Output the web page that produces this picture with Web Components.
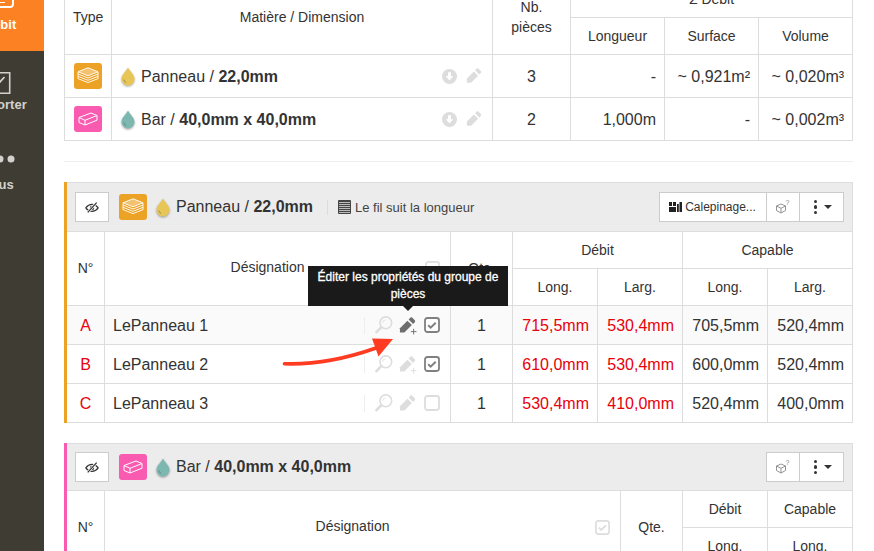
<!DOCTYPE html>
<html lang="fr">
<head>
<meta charset="utf-8">
<title>Débit</title>
<style>
html, body { margin: 0; height: 551px; overflow: hidden; background: #fff; }
body { display: flex; position: relative; font-family: "Liberation Sans", Arial, sans-serif; color: #333; }
main { width: 789px; margin: -20px 0 0 20px; display: flex; flex-direction: column; flex: none; }
main > * { flex: none; }
</style>
</head>
<body>
<mi-sidebar>
  <mi-nav-item icon="cut" active>Débit</mi-nav-item>
  <mi-nav-item icon="export">Exporter</mi-nav-item>
  <mi-nav-item icon="dots">Plus</mi-nav-item>
</mi-sidebar>

<main>
  <mi-summary-table></mi-summary-table>
  <mi-divider></mi-divider>

  <mi-group-panel color="#eca224" kind="panel" drop="#e8c655" calepinage>
    <span slot="title">Panneau / <b>22,0mm</b></span>
    <span slot="note">Le fil suit la longueur</span>
    <mi-parts-table layout="full"></mi-parts-table>
  </mi-group-panel>

  <mi-group-panel color="#f95bb1" kind="bar" drop="#7db8b0" style="margin-top:20px">
    <span slot="title">Bar / <b>40,0mm x 40,0mm</b></span>
    <mi-parts-table layout="bar"></mi-parts-table>
  </mi-group-panel>
</main>

<mi-tooltip>Éditer les propriétés du groupe de pièces</mi-tooltip>
<mi-red-arrow></mi-red-arrow>

<script>
const PENCIL = `<path fill="currentColor" d="M12 .8c.6-.6 1.500-.6 2.100 0l2.600 2.600c.6.6.6 1.500 0 2.100l-1.800 1.800-4.700-4.700z"/><path fill="currentColor" d="M8.900 3.900l4.700 4.700-7.900 7.900H1v-4.700z"/>`;

const ICONS = {
    pencil: `<svg viewBox="0 0 18 18">${PENCIL}</svg>`,
    pencilplus: `<svg viewBox="0 0 18 18" style="overflow:visible">${PENCIL}<path fill="none" stroke="currentColor" stroke-width="1" d="M15.500 12.500v6M12.500 15.500h6"/></svg>`,
    search: `<svg viewBox="0 0 18 18"><circle cx="10.800" cy="6.800" r="5.900" fill="none" stroke="currentColor" stroke-width="1.600"/><path d="M6.300 11.200L1.500 16.200" stroke="currentColor" stroke-width="2.600" stroke-linecap="round"/><path d="M7.500 7a3 3 0 0 1 3-3" fill="none" stroke="currentColor" stroke-width=".8"/></svg>`,
    check: `<svg viewBox="0 0 16 16"><rect x="1" y="1" width="14" height="14" rx="2.400" fill="#fff" stroke="currentColor" stroke-width="1.800"/><path d="M4.200 8.200l2.500 2.500 5-5" fill="none" stroke="currentColor" stroke-width="2"/></svg>`,
    box: `<svg viewBox="0 0 16 16"><rect x="1" y="1" width="14" height="14" rx="2.400" fill="#fff" stroke="currentColor" stroke-width="1.800"/></svg>`,
    download: `<svg viewBox="0 0 16 16"><circle cx="8" cy="8" r="8" fill="currentColor"/><path fill="#fff" d="M6.400 3.400h3.200v4.200h2.500L8 12.200 3.900 7.600h2.500z"/></svg>`,
    eyeslash: `<svg viewBox="0 0 18 14"><path d="M1 7.500C3.500 4.200 6 3 9 3s5.500 1.200 8 4.500C14.500 10.800 12 12 9 12S3.500 10.800 1 7.500z" fill="none" stroke="#333" stroke-width="1.500"/><circle cx="9" cy="7.500" r="2.800" fill="#333"/><path d="M14.500 1L4 13" stroke="#fff" stroke-width="3.200"/><path d="M15 .8L3.500 13.200" stroke="#333" stroke-width="1.600"/></svg>`,
    listalt: `<svg viewBox="0 0 13 14"><rect width="13" height="14" rx="1" fill="#444"/><path d="M1 2.500h11M1 4.500h11M1 6.500h11M1 8.500h11M1 10.500h11M1 12.500h11" stroke="#bbb" stroke-width="1"/></svg>`,
    blocks: `<svg viewBox="0 0 13 10"><path fill="#222" d="M0 0h3v4H0zM4 0h3v4H4zM0 5h7v5H0zM8 2h1.800v8H8zM10.500 0H13v10h-2.500z"/></svg>`,
    cubeq: `<svg viewBox="0 0 16 16"><g fill="none" stroke="#888" stroke-width=".9"><path d="M6 5l4.500 2v4.500L6 14l-4.500-2.500V7z"/><path d="M1.500 7L6 9.300 10.500 7M6 9.300V14"/></g><text x="10.500" y="6" font-size="7" fill="#888" font-family="Liberation Sans">?</text></svg>`,
    stack: `<svg viewBox="0 0 22 18" fill="none" stroke="#fff" stroke-width=".9"><path fill="#fff" fill-opacity=".35" d="M11 .8l10 4-10 4-10-4z"/><path d="M1 7l10 4 10-4M1 9.300l10 4 10-4M1 11.600l10 4 10-4M1 4.800v7M21 4.800v7"/></svg>`,
    brick: `<svg viewBox="0 0 20 14" fill="none" stroke="#fff" stroke-width="1"><path d="M1 5.500L13 1l6 2.500L7 8.300zM1 5.500v5L7 13V8.300M7 13l12-4.800V3.500"/></svg>`
};

class MiIcon extends HTMLElement
{
    constructor(){
        super();
        this.attachShadow({mode: "open"});
        const w = this.getAttribute("w") || 16;
        const h = this.getAttribute("h") || w;
        this.shadowRoot.innerHTML = `
        <style>
        :host { display: inline-flex; flex: none; width: ${w}px; height: ${h}px; }
        svg { width: 100%; height: 100%; display: block; }
        </style>
        ${ICONS[this.getAttribute("name")]}
        `;
    }
}
customElements.define("mi-icon", MiIcon);

class MiSidebar extends HTMLElement
{
    constructor(){
        super();
        this.attachShadow({mode: "open"});
        this.shadowRoot.innerHTML = `
        <style>
        :host { display: block; flex: none; width: 44px; height: 551px; background: #3f3c34; overflow: hidden; }
        div { width: 88px; margin-left: -44px; display: flex; flex-direction: column; }
        </style>
        <div><slot></slot></div>
        `;
    }
}
customElements.define("mi-sidebar", MiSidebar);

class MiNavItem extends HTMLElement
{
    constructor(){
        super();
        this.attachShadow({mode: "open"});
        const kind = this.getAttribute("icon");
        const glyph = {
            cut: `<svg width="30" height="16" viewBox="0 0 30 16" style="margin-top:-8px"><path d="M8 1h20v11q0 3-3 3H8" fill="none" stroke="#fff" stroke-width="2"/><path d="M8 10.500h12" stroke="#fff" stroke-width="1"/></svg>`,
            export: `<svg width="22" height="22" viewBox="0 0 22 22"><path d="M10 .8h10.700v20.400H1V12" fill="none" stroke="#d2d1cd" stroke-width="1.600"/><path d="M6 6.500l4.500 4 5-5.500" fill="none" stroke="#d2d1cd" stroke-width="1.800"/></svg>`,
            dots: `<svg width="34" height="10" viewBox="0 0 34 10"><circle cx="6" cy="5" r="3.500" fill="#d2d1cd"/><circle cx="17" cy="5" r="3.500" fill="#d2d1cd"/><circle cx="28" cy="5" r="3.500" fill="#d2d1cd"/></svg>`
        }[kind];
        const active = this.hasAttribute("active");
        this.shadowRoot.innerHTML = `
        <style>
        :host {
            display: flex; flex-direction: column; align-items: center;
            font-size: 13px; font-weight: bold; color: #d2d1cd;
        }
        :host([active]) { background: #fc8122; color: #fff; height: 51px; }
        :host([icon="export"]) { padding-top: 21px; height: 64px; }
        :host([icon="dots"]) { padding-top: 18px; }
        svg { display: block; }
        span { display: block; line-height: 16px; margin-top: ${active ? 9 : kind === "dots" ? 13 : 3}px; }
        </style>
        ${glyph}
        <span><slot></slot></span>
        `;
    }
}
customElements.define("mi-nav-item", MiNavItem);

class MiSwatch extends HTMLElement
{
    constructor(){
        super();
        this.attachShadow({mode: "open"});
        const bar = this.getAttribute("kind") === "bar";
        this.shadowRoot.innerHTML = `
        <style>
        :host {
            display: inline-flex; flex: none; align-items: center; justify-content: center;
            width: 28px; height: 26px; border-radius: 3px;
            background: ${bar ? "#f95bb1" : "#eca224"};
        }
        </style>
        <mi-icon name="${bar ? "brick" : "stack"}" w="${bar ? 20 : 22}" h="${bar ? 14 : 18}"></mi-icon>
        `;
    }
}
customElements.define("mi-swatch", MiSwatch);

class MiDrop extends HTMLElement
{
    constructor(){
        super();
        this.attachShadow({mode: "open"});
        const color = this.getAttribute("color");
        this.shadowRoot.innerHTML = `
        <style>
        :host { display: inline-flex; flex: none; width: 14px; height: 19px; }
        svg { filter: drop-shadow(0 1px 1px rgba(0,0,0,.35)); overflow: visible; }
        </style>
        <svg width="14" height="19" viewBox="0 0 14 19">
            <path fill="${color}" d="M7 .5C8.500 4 13.500 7.500 13.500 12a6.500 6.500 0 0 1-13 0C.5 7.500 5.500 4 7 .5z"/>
            <path d="M2.800 12.500a3.800 3.800 0 0 0 2.400 3" fill="none" stroke="rgba(70,70,90,.55)" stroke-width=".8"/>
        </svg>
        `;
    }
}
customElements.define("mi-drop", MiDrop);

class MiDivider extends HTMLElement
{
    constructor(){
        super();
        this.attachShadow({mode: "open"});
        this.shadowRoot.innerHTML = `
        <style>
        :host { display: block; height: 1px; background: #eee; margin: 20px 0; }
        </style>
        `;
    }
}
customElements.define("mi-divider", MiDivider);

const TABLE_CSS = `
    table { border-collapse: separate; border-spacing: 0; table-layout: fixed; width: 100%; font-size: 14px; color: #333; }
    th, td { box-sizing: border-box; border-right: 1px solid #ddd; border-bottom: 1px solid #ddd; padding: 0 8px; }
    th { font-weight: normal; text-align: center; line-height: 20px; }
    th[rowspan] { padding-bottom: 2px; }
    td { font-size: 16px; }
    td.t { padding-top: 2px; }
    .r { text-align: right; }
    .c { text-align: center; }
`;

class MiSummaryTable extends HTMLElement
{
    constructor(){
        super();
        this.attachShadow({mode: "open"});
        const row = (kind, drop, label, qty, len, surf, vol) => `
            <tr class="data">
                <td class="c"><mi-swatch kind="${kind}"></mi-swatch></td>
                <td class="mat">
                    <div class="mat-in">
                        <mi-drop color="${drop}"></mi-drop>
                        <span class="label">${label}</span>
                        <mi-icon name="download" w="15" style="color:#ddd"></mi-icon>
                        <mi-icon name="pencil" w="16" style="color:#ddd"></mi-icon>
                    </div>
                </td>
                <td class="c t">${qty}</td>
                <td class="r t">${len}</td>
                <td class="r t">${surf}</td>
                <td class="r t">${vol}</td>
            </tr>`;
        this.shadowRoot.innerHTML = `
        <style>
        :host { display: block; }
        ${TABLE_CSS}
        table { border-left: 1px solid #ddd; border-top: 1px solid #ddd; }
        tr.h { height: 37px; }
        tr.data { height: 43px; }
        td.mat { padding: 0 10px 0 9px; }
        .mat-in { display: flex; align-items: center; gap: 9px; }
        .mat-in mi-drop { margin-right: -3px; }
        .label { flex: 1; white-space: nowrap; padding-top: 2px; }
        mi-swatch { vertical-align: middle; }
        </style>
        <table>
            <colgroup><col style="width:47px"><col style="width:381px"><col style="width:78px"><col style="width:94px"><col style="width:94px"><col style="width:94px"></colgroup>
            <tr class="h">
                <th rowspan="2">Type</th>
                <th rowspan="2">Matière / Dimension</th>
                <th rowspan="2">Nb.<br>pièces</th>
                <th colspan="3">Σ Débit</th>
            </tr>
            <tr class="h"><th>Longueur</th><th>Surface</th><th>Volume</th></tr>
            ${row("panel", "#e8c655", "Panneau / <b>22,0mm</b>", "3", "-", "~ 0,921m²", "~ 0,020m³")}
            ${row("bar", "#7db8b0", "Bar / <b>40,0mm x 40,0mm</b>", "2", "1,000m", "-", "~ 0,002m³")}
        </table>
        `;
    }
}
customElements.define("mi-summary-table", MiSummaryTable);

class MiGroupPanel extends HTMLElement
{
    constructor(){
        super();
        this.attachShadow({mode: "open"});
        const calepinage = this.hasAttribute("calepinage");
        const note = calepinage ? `
            <i class="sep"></i>
            <mi-icon name="listalt" w="13" h="14"></mi-icon>
            <span class="note"><slot name="note"></slot></span>` : "";
        this.shadowRoot.innerHTML = `
        <style>
        :host { display: block; border-left: 3px solid ${this.getAttribute("color")}; }
        .head {
            box-sizing: border-box; height: ${calepinage ? 50 : 48}px;
            display: flex; align-items: center;
            padding: 0 8px; background: #ececec;
            border: 1px solid #ddd; border-left: 0;
        }
        .head > mi-swatch { margin: 0 9px 0 10px; }
        .title { font-size: 16px; margin-left: 6px; white-space: nowrap; }
        .sep { width: 1px; height: 15px; background: #ddd; margin: 0 10px 0 14px; }
        .note { font-size: 13px; margin-left: 4px; white-space: nowrap; color: #444; }
        .btns { margin-left: auto; display: flex; height: 30px; }
        button {
            box-sizing: border-box; height: 30px; margin: 0 0 0 -1px; padding: 0;
            display: inline-flex; align-items: center; justify-content: center; gap: 3px;
            background: #fff; border: 1px solid #ccc; border-radius: 0;
            font: 12px "Liberation Sans", Arial, sans-serif; color: #333;
        }
        .eye { width: 34px; margin: 0; }
        .cal { width: 108px; padding-right: 1px; }
        .cube { width: 34px; }
        .more { width: 45px; gap: 7px; padding-left: 3px; }
        .kebab { display: flex; flex-direction: column; gap: 2px; }
        .kebab i { width: 3.500px; height: 3.500px; border-radius: 50%; background: #333; }
        .caret { width: 0; height: 0; border: 4px solid transparent; border-top-color: #333; border-bottom: 0; }
        </style>
        <div class="head">
            <button class="eye"><mi-icon name="eyeslash" w="14" h="11"></mi-icon></button>
            <mi-swatch kind="${this.getAttribute("kind")}"></mi-swatch>
            <mi-drop color="${this.getAttribute("drop")}"></mi-drop>
            <span class="title"><slot name="title"></slot></span>
            ${note}
            <div class="btns">
                ${calepinage ? `<button class="cal"><mi-icon name="blocks" w="13" h="10"></mi-icon>Calepinage...</button>` : ""}
                <button class="cube"><mi-icon name="cubeq" w="16"></mi-icon></button>
                <button class="more"><span class="kebab"><i></i><i></i><i></i></span><span class="caret"></span></button>
            </div>
        </div>
        <slot></slot>
        `;
    }
}
customElements.define("mi-group-panel", MiGroupPanel);

class MiPartsTable extends HTMLElement
{
    constructor(){
        super();
        this.attachShadow({mode: "open"});
        const full = this.getAttribute("layout") === "full";
        const row = (cls, letter, name, pencil, check, d1, d2, c1, c2) => `
            <tr class="part ${cls}">
                <td class="c t red">${letter}</td>
                <td class="name">
                    <div class="name-in">
                        <span class="n">${name}</span>
                        <i class="sep"></i>
                        <mi-icon class="s" name="search" w="18" style="color:#ddd"></mi-icon>
                        <mi-icon class="p" name="${pencil[0]}" w="17" style="color:${pencil[1]}"></mi-icon>
                        <mi-icon class="b" name="${check[0]}" w="16" style="color:${check[1]}"></mi-icon>
                    </div>
                </td>
                <td class="c t">1</td>
                <td class="r t red">${d1}</td>
                <td class="r t red">${d2}</td>
                <td class="r t">${c1}</td>
                <td class="r t">${c2}</td>
            </tr>`;
        const body = full ? `
            <colgroup><col style="width:38px"><col style="width:346px"><col style="width:62px"><col style="width:85px"><col style="width:85px"><col style="width:85px"><col style="width:85px"></colgroup>
            <tr class="h">
                <th rowspan="2">N°</th>
                <th rowspan="2"><div class="des"><span>Désignation</span><mi-icon name="check" w="15" style="color:#ddd"></mi-icon></div></th>
                <th rowspan="2">Qte.</th>
                <th colspan="2">Débit</th>
                <th colspan="2">Capable</th>
            </tr>
            <tr class="h"><th>Long.</th><th>Larg.</th><th>Long.</th><th>Larg.</th></tr>
            ${row("hover", "A", "LePanneau 1", ["pencilplus", "#6e6e6e"], ["check", "#808080"], "715,5mm", "530,4mm", "705,5mm", "520,4mm")}
            ${row("", "B", "LePanneau 2", ["pencilplus", "#ddd"], ["check", "#808080"], "610,0mm", "530,4mm", "600,0mm", "520,4mm")}
            ${row("", "C", "LePanneau 3", ["pencil", "#ddd"], ["box", "#ddd"], "530,4mm", "410,0mm", "520,4mm", "400,0mm")}
        ` : `
            <colgroup><col style="width:38px"><col style="width:516px"><col style="width:62px"><col style="width:85px"><col style="width:85px"></colgroup>
            <tr class="h">
                <th rowspan="2">N°</th>
                <th rowspan="2"><div class="des"><span>Désignation</span><mi-icon name="check" w="15" style="color:#ddd"></mi-icon></div></th>
                <th rowspan="2">Qte.</th>
                <th>Débit</th>
                <th>Capable</th>
            </tr>
            <tr class="h"><th>Long.</th><th>Long.</th></tr>
        `;
        this.shadowRoot.innerHTML = `
        <style>
        :host { display: block; }
        ${TABLE_CSS}
        tr.h { height: 37px; }
        tr.part { height: 39px; }
        tr.hover { background: #fafafa; }
        .red { color: #e8000b; }
        td.name { padding: 0 0 0 8px; }
        .name-in { display: flex; align-items: center; }
        .n { flex: 1; padding-top: 2px; }
        .sep { width: 1px; height: 17px; background: #eee; margin-right: 10px; }
        .s { margin-right: 6px; }
        .p { margin-right: 8px; }
        .b { margin-right: 10px; }
        .des { display: flex; align-items: center; position: relative; padding-right: 20px; justify-content: center; margin-top: -2px; }
        .des mi-icon { position: absolute; right: 2px; top: 4px; }
        </style>
        <table>${body}</table>
        `;
    }
}
customElements.define("mi-parts-table", MiPartsTable);

class MiTooltip extends HTMLElement
{
    constructor(){
        super();
        this.attachShadow({mode: "open"});
        this.shadowRoot.innerHTML = `
        <style>
        :host {
            position: absolute; left: 308px; top: 266px; box-sizing: border-box; width: 200px; height: 40px;
            padding: 3px 8px; background: #1a1a1a; color: #fff;
            font-size: 12px; line-height: 17px; text-align: center;
            -webkit-text-stroke: .3px #fff;
        }
        :host::after {
            content: ""; position: absolute; left: 95px; top: 40px; width: 0; height: 0;
            border: 5px solid transparent; border-top-color: #1a1a1a; border-bottom: 0;
        }
        </style>
        <slot></slot>
        `;
    }
}
customElements.define("mi-tooltip", MiTooltip);

class MiRedArrow extends HTMLElement
{
    constructor(){
        super();
        this.attachShadow({mode: "open"});
        this.shadowRoot.innerHTML = `
        <style>
        :host { position: absolute; left: 280px; top: 335px; width: 120px; height: 36px; }
        svg { display: block; }
        </style>
        <svg width="120" height="36" viewBox="0 0 120 36">
            <path d="M4.500 28.800C34 29.800 62 25 96 13" fill="none" stroke="#ff3b22" stroke-width="3.600" stroke-linecap="round"/>
            <path d="M113 4L92 3.500 98.500 21.500z" fill="#ff3b22"/>
        </svg>
        `;
    }
}
customElements.define("mi-red-arrow", MiRedArrow);
</script>
</body>
</html>
